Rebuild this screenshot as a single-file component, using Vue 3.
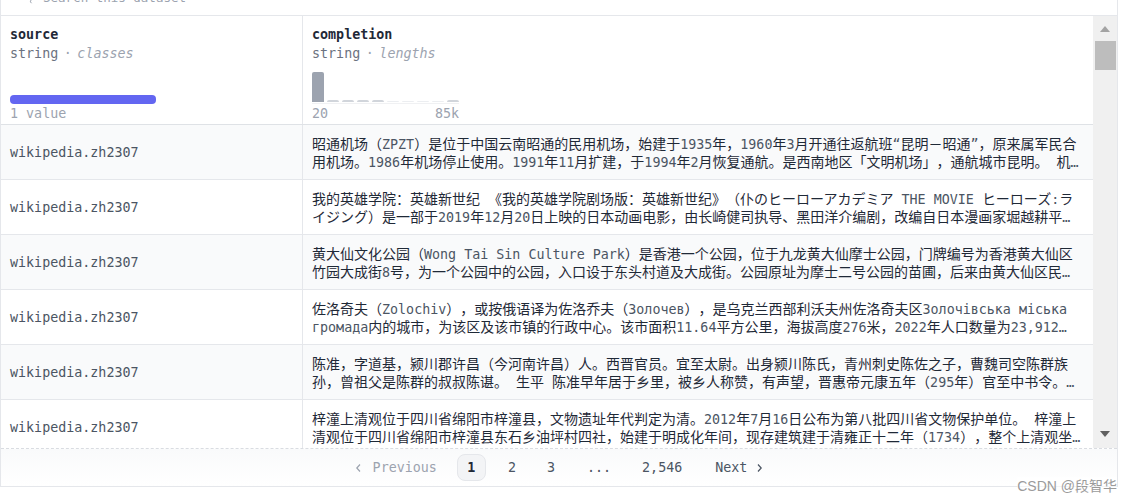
<script setup>
const rows = [
  ['昭通机场(ZPZT)是位于中国云南昭通的民用机场,始建于1935年,1960年3月开通往返航班“昆明-昭通”,原来属军民合', '用机场。1986年机场停止使用。1991年11月扩建,于1994年2月恢复通航。是西南地区「文明机场」,通航城市昆明。 机…'],
  ['我的英雄学院:英雄新世纪 《我的英雄学院剧场版:英雄新世纪》(仆のヒーローアカデミア THE MOVIE ヒーローズ:ラ', 'イジング)是一部于2019年12月20日上映的日本动画电影,由长崎健司执导、黑田洋介编剧,改编自日本漫画家堀越耕平…'],
  ['黄大仙文化公园(Wong Tai Sin Culture Park)是香港一个公园,位于九龙黄大仙摩士公园,门牌编号为香港黄大仙区', '竹园大成街8号,为一个公园中的公园,入口设于东头村道及大成街。公园原址为摩士二号公园的苗圃,后来由黄大仙区民…'],
  ['佐洛奇夫(Zolochiv),或按俄语译为佐洛乔夫(Золочев),是乌克兰西部利沃夫州佐洛奇夫区Золочівська міська', 'громада内的城市,为该区及该市镇的行政中心。该市面积11.64平方公里,海拔高度276米,2022年人口数量为23,912…'],
  ['陈准,字道基,颍川郡许昌(今河南许昌)人。西晋官员。宜至太尉。出身颍川陈氏,青州刺史陈佐之子,曹魏司空陈群族', '孙,曾祖父是陈群的叔叔陈谌。 生平 陈准早年居于乡里,被乡人称赞,有声望,晋惠帝元康五年(295年)官至中书令。…'],
  ['梓潼上清观位于四川省绵阳市梓潼县,文物遗址年代判定为清。2012年7月16日公布为第八批四川省文物保护单位。 梓潼上', '清观位于四川省绵阳市梓潼县东石乡油坪村四社,始建于明成化年间,现存建筑建于清雍正十二年(1734),整个上清观坐…'],
]
// Chinese body text uses full-width punctuation; digit groups and the katakana title colon stay narrow.
const fullWidth = (line) =>
  line
    .replace(/(?<!\d),/g, '\uFF0C')
    .replace(/\(/g, '\uFF08')
    .replace(/\)/g, '\uFF09')
    .replace(/:(?!ラ)/g, '\uFF1A')
    .replace(/-/g, '\uFF0D')
const segments = (line) =>
  fullWidth(line).split(/([\u0020-\u04ff\u2026\u201c\u201d]+)/).filter(Boolean).map((text) => ({
    text,
    latin: /^[\u0020-\u04ff\u2026\u201c\u201d]/.test(text),
  }))
const bars = [
  { h: 30, c: '#9ca3af' }, { h: 2, c: '#d1d5db' }, { h: 2, c: '#d1d5db' }, { h: 2, c: '#d1d5db' }, { h: 2, c: '#d1d5db' },
  { h: 1, c: '#eceef1' }, { h: 1, c: '#eceef1' }, { h: 1, c: '#eceef1' }, { h: 1, c: '#eceef1' }, { h: 2, c: '#d1d5db' },
]
</script>

<template>
  <div class="page">
    <div class="card">
      <div class="search">
        <svg class="search-icon" width="8" height="6" viewBox="0 0 8 6"><path d="M4 0 Q2.5 2 4.5 3.2" fill="none" stroke="#9ca3af" stroke-width="1" /></svg>
        <span class="search-text">Search this dataset</span>
      </div>
      <div class="table">
        <div class="main">
          <div class="row head">
            <div class="col-a cell-head">
              <div class="name">source</div>
              <div class="type">string <span class="dot">·</span> <i>classes</i></div>
              <div class="class-bar"></div>
              <div class="stat">1 value</div>
            </div>
            <div class="col-b cell-head">
              <div class="name">completion</div>
              <div class="type">string <span class="dot">·</span> <i>lengths</i></div>
              <div class="hist">
                <div class="hist-bars">
                  <span v-for="(b, i) in bars" :key="i" class="hist-bar" :style="{ height: b.h + 'px', background: b.c }"></span>
                </div>
                <div class="hist-labels stat"><span>20</span><span>85k</span></div>
              </div>
            </div>
          </div>
          <div class="body">
            <div v-for="(lines, i) in rows" :key="i" class="row data">
              <div class="col-a cell source">wikipedia.zh2307</div>
              <div class="col-b cell text">
                <div v-for="(line, j) in lines" :key="j" class="line">
                  <span v-for="(s, k) in segments(line)" :key="k" :class="s.latin ? 'lat' : 'cjk'">{{ s.text }}</span>
                </div>
              </div>
            </div>
          </div>
        </div>
        <div class="scrollbar">
          <span class="arrow up"></span>
          <span class="thumb"></span>
          <span class="spacer"></span>
          <span class="arrow down"></span>
        </div>
      </div>
      <nav class="pager">
        <span class="pg muted prev">
          <svg width="7" height="10" viewBox="0 0 7 10"><path d="M5 1.5 1.8 5 5 8.5" fill="none" stroke="#9ca3af" stroke-width="1.2" /></svg>
          Previous
        </span>
        <span class="pg current">1</span>
        <span class="pg num n2">2</span>
        <span class="pg num n3">3</span>
        <span class="pg num n4">...</span>
        <span class="pg num n5">2,546</span>
        <span class="pg next">
          Next
          <svg width="7" height="10" viewBox="0 0 7 10"><path d="M2 1.5 5.2 5 2 8.5" fill="none" stroke="#4b5563" stroke-width="1.2" /></svg>
        </span>
      </nav>
    </div>
    <div class="watermark">CSDN @段智华</div>
  </div>
</template>

<style scoped>
.page {
  position: relative;
  width: 1132px;
  height: 502px;
  overflow: hidden;
  background: #fff;
  font-family: "DejaVu Sans Mono", "Noto Sans CJK SC", monospace;
  font-size: 13.35px;
}
.card {
  width: 1118px;
  height: 487px;
  box-sizing: border-box;
  border: 1px solid #e5e7eb;
  border-top: 0;
  display: flex;
  flex-direction: column;
}
.search {
  height: 15px;
  flex: none;
  box-sizing: content-box;
  border-bottom: 1px solid #e5e7eb;
  overflow: hidden;
  display: flex;
  align-items: flex-start;
  padding-left: 26px;
  gap: 8px;
}
.search-text {
  margin-top: -9px;
  font-size: 12.5px;
  line-height: 14px;
  color: #9ca3af;
}
.table {
  flex: 1;
  min-height: 0;
  display: flex;
}
.main {
  flex: 1;
  min-width: 0;
  display: flex;
  flex-direction: column;
}
.row {
  display: flex;
  box-sizing: border-box;
}
.col-a {
  width: 302px;
  flex: none;
  box-sizing: border-box;
  border-right: 1px solid #e5e7eb;
  padding-left: 9px;
}
.col-b {
  flex: 1;
  min-width: 0;
  padding-left: 9px;
}
.head {
  height: 109px;
  border-bottom: 1px solid #dfe2e6;
}
.cell-head {
  display: flex;
  flex-direction: column;
  padding-top: 11px;
}
.name {
  font-weight: 700;
  color: #1f2937;
  line-height: 16px;
}
.type {
  margin-top: 2px;
  color: #6b7280;
  line-height: 18px;
  word-spacing: -2.5px;
}
.type i {
  color: #9ca3af;
}
.dot {
  color: #9ca3af;
}
.class-bar {
  margin-top: 32px;
  width: 146px;
  height: 9px;
  border-radius: 4px;
  background: #6366f1;
}
.stat {
  margin-top: 2px;
  color: #9ca3af;
  line-height: 16px;
}
.hist {
  width: 147px;
  margin-top: 9px;
}
.hist-bars {
  height: 32px;
  box-sizing: border-box;
  padding-bottom: 1px;
  display: flex;
  align-items: flex-end;
  gap: 3px;
  border-bottom: 1px solid #f0f1f3;
}
.hist-bar {
  width: 12px;
  border-radius: 2px 2px 0 0;
}
.hist-labels {
  display: flex;
  justify-content: space-between;
}
.body {
  flex: 1;
  min-height: 0;
  overflow: hidden;
}
.data {
  height: 55px;
  align-items: stretch;
  border-bottom: 1px solid #e5e7eb;
}
.data:nth-child(odd) {
  background: #f9fafb;
}
.cell {
  display: flex;
  align-items: center;
}
.source {
  color: #4b5563;
}
.text {
  flex-direction: column;
  align-items: flex-start;
  justify-content: center;
}
.line {
  height: 18px;
  line-height: 18px;
  white-space: nowrap;
  text-spacing-trim: space-all;
  font-feature-settings: "chws" 0;
}
.cjk {
  font-family: "Noto Sans CJK SC", sans-serif;
  font-size: 14px;
  color: #1f2937;
}
.lat {
  color: #4b5563;
}
.scrollbar {
  width: 24px;
  flex: none;
  background: #f0f0f0;
  display: flex;
  flex-direction: column;
  align-items: center;
}
.arrow {
  width: 0;
  height: 0;
  flex: none;
  border-left: 5.5px solid transparent;
  border-right: 5.5px solid transparent;
}
.up {
  margin-top: 10px;
  border-bottom: 6px solid #a3a3a3;
}
.thumb {
  margin-top: 9px;
  width: 21px;
  height: 29px;
  flex: none;
  background: #bdbdbd;
}
.spacer {
  flex: 1;
}
.down {
  margin-bottom: 11px;
  border-top: 6px solid #606060;
}
.pager {
  height: 38px;
  flex: none;
  box-sizing: border-box;
  border-top: 1px dashed #d9dce1;
  background: linear-gradient(to bottom, #f9fafb, #ffffff);
  display: flex;
  align-items: center;
  justify-content: center;
}
.pg {
  display: flex;
  align-items: center;
  color: #4b5563;
}
.muted {
  color: #9ca3af;
}
.prev {
  gap: 11px;
  margin-right: 20px;
}
.current {
  width: 29px;
  height: 27px;
  box-sizing: border-box;
  justify-content: center;
  border: 1px solid #e5e7eb;
  border-radius: 8px;
  background: #f3f4f6;
  color: #1f2937;
  font-weight: 700;
}
.n2 { margin-left: 22px; }
.n3 { margin-left: 31px; }
.n4 { margin-left: 32px; }
.n5 { margin-left: 31px; }
.next {
  gap: 9px;
  margin-left: 33px;
}
.watermark {
  position: absolute;
  right: 15px;
  top: 477px;
  font-family: "Liberation Sans", "Noto Sans CJK SC", sans-serif;
  font-size: 14px;
  line-height: 18px;
  color: #9b9b9b;
  background: rgba(255, 255, 255, 0.55);
}
</style>
